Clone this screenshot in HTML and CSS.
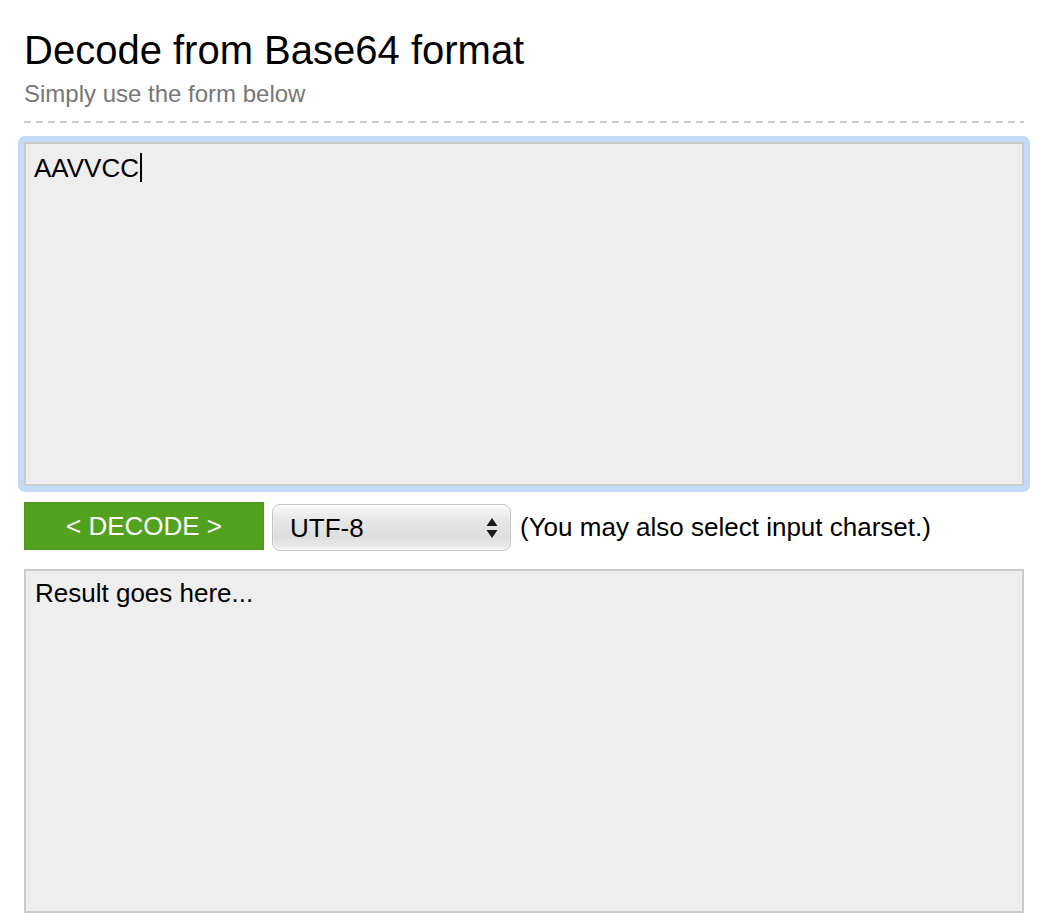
FILE: index.html
```html
<!DOCTYPE html>
<html>
<head>
<meta charset="utf-8">
<title>Decode from Base64 format</title>
<link rel="stylesheet" href="styles.css">
</head>
<body>
<div class="page">
  <h1 class="title">Decode from Base64 format</h1>
  <div class="sub">Simply use the form below</div>
  <div class="rule"></div>
  <div class="focus-ring">
    <div class="box input-box">AAVVCC<span class="caret"></span></div>
  </div>
  <div class="controls">
    <div class="btn">&lt; DECODE &gt;</div>
    <div class="select">
      <span class="select-text">UTF-8</span>
      <svg class="arrows" width="12" height="22" viewBox="0 0 12 22">
        <polygon points="6,1 11.5,9 0.5,9" fill="#1a1a1a"/>
        <polygon points="0.5,13 11.5,13 6,21" fill="#1a1a1a"/>
      </svg>
    </div>
    <div class="hint">(You may also select input charset.)</div>
  </div>
  <div class="box result-box">Result goes here...</div>
</div>
</body>
</html>
```

FILE: styles.css
```css
html, body {
  margin: 0;
  padding: 0;
  background: #ffffff;
}
body {
  font-family: "Liberation Sans", Arial, Helvetica, sans-serif;
  color: #000;
}
.page {
  width: 1000px;
  padding: 27px 0 0 24px;
}
.title {
  margin: 0;
  font-size: 40px;
  line-height: 46px;
  font-weight: normal;
  color: #000;
}
.sub {
  margin-top: 7px;
  font-size: 24px;
  line-height: 28px;
  color: #777777;
}
.rule {
  margin-top: 13px;
  height: 2px;
  background: repeating-linear-gradient(to right, #cccccc 0 7px, transparent 7px 12px);
}
.focus-ring {
  margin: 13px -6px 0 -6px;
  padding: 6px;
  background: #c2dcf7;
  border-radius: 7px;
}
.box {
  box-sizing: border-box;
  height: 344px;
  border: 2px solid #cacaca;
  background: #eeeeee;
  font-size: 26px;
  line-height: 30px;
  color: #000;
}
.input-box {
  padding: 9px 8px;
}
.caret {
  display: inline-block;
  width: 2px;
  height: 29px;
  background: #000;
  vertical-align: -5px;
  margin-left: 1px;
}
.controls {
  margin-top: 10px;
  display: flex;
  align-items: flex-start;
}
.btn {
  box-sizing: border-box;
  width: 240px;
  height: 48px;
  background: #52a11f;
  border: 1px solid #4c9a1b;
  color: #ffffff;
  font-size: 26px;
  line-height: 46px;
  text-align: center;
}
.select {
  box-sizing: border-box;
  margin-left: 8px;
  margin-top: 2px;
  width: 239px;
  height: 47px;
  border: 1px solid #c4c4c4;
  border-radius: 8px;
  background: linear-gradient(to bottom, #fafafa 0%, #e8e8e8 30%, #dedede 70%, #ececec 100%);
  box-shadow: inset 0 1px 0 #ffffff, inset 0 -2px 2px rgba(255,255,255,0.7);
  display: flex;
  align-items: center;
  justify-content: space-between;
  padding: 0 12px 0 17px;
  font-size: 26px;
}
.select-text {
  line-height: 30px;
}
.arrows {
  display: block;
}
.hint {
  margin-left: 9px;
  margin-top: 2px;
  font-size: 26px;
  line-height: 47px;
}
.result-box {
  margin-top: 18px;
  padding: 7px 9px;
}
```
